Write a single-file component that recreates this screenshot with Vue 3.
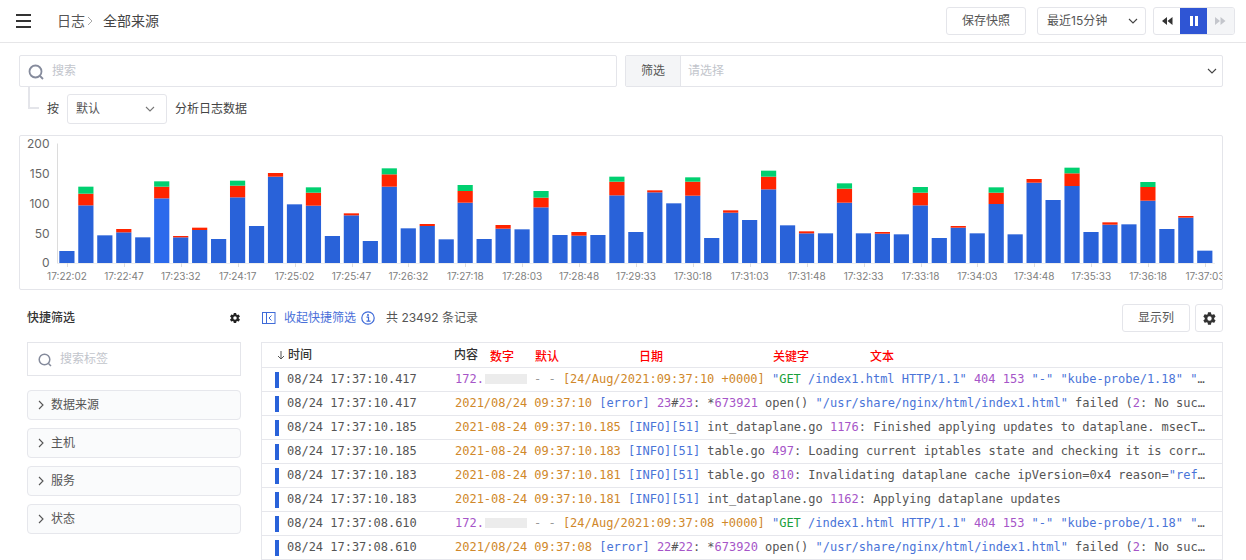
<script setup>
const bar = [
  [363],[226,191,170],[316],[307,297],[322],[205,170,154],[322,318],[300,293],[327],[202,167,152],
  [288],[140,129],[223],[227,188,172],[318],[256,250],[333],[170,133,115],[295],[288,282],
  [328],[218,183,165],[327],[296,285],[298],[232,203,183],[315],[317,306],[315],[196,155,140],
  [306],[187,181],[220],[197,155,142],[324],[248,241],[270],[178,140,122],[286],[310,304],
  [310],[218,176,160],[310],[311,306],[313],[226,188,171],[324],[293,288],[310],[222,188,172],
  [313],[158,147],[210],[168,130,113],[306],[284,277],[283],[212,171,156],[297],[263,258],[362]
]
const colors = ['#2962d9', '#ff2400', '#00d070']
const y = v => 130 + v / 3
const rects = []
bar.forEach((tops, i) => {
  const x = 59.3 + 18.965 * i
  tops.forEach((t, k) => {
    const bottom = k === 0 ? 263 : y(tops[k - 1])
    rects.push({ x, y: y(t), h: bottom - y(t), fill: i === 5 && k === 0 ? '#2c6aec' : colors[k] })
  })
})
const xLabels = ['17:22:02','17:22:47','17:23:32','17:24:17','17:25:02','17:25:47','17:26:32','17:27:18','17:28:03','17:28:48','17:29:33','17:30:18','17:31:03','17:31:48','17:32:33','17:33:18','17:34:03','17:34:48','17:35:33','17:36:18','17:37:03']
  .map((text, i) => ({ text, x: 67 + 56.9 * i }))
const yLabels = [['200',143.5],['150',173.5],['100',203.5],['50',233.5],['0',262.5]].map(([text, y]) => ({ text, y }))

const access = ts => [
  ['p','172.'],['mask',''],['g',' - - '],['o',`[${ts} +0000]`],['b',' "'],['gr','GET'],['b',' /index1.html HTTP/1.1" '],['p','404 153'],['b',' "-" "kube-probe/1.18" "Mozilla/5.0 compatible"']
]
const rows = [
  { t:'08/24 17:37:10.417', c: access('24/Aug/2021:09:37:10') },
  { t:'08/24 17:37:10.417', c: [['o','2021/08/24 09:37:10'],['b',' [error]'],['p',' 23'],['d','#'],['p','23'],['d',': *'],['p','673921'],['d',' open() '],['b','"/usr/share/nginx/html/index1.html"'],['d',' failed ('],['p','2'],['d',': No such file or directory), client']] },
  { t:'08/24 17:37:10.185', c: [['o','2021-08-24 09:37:10.185'],['b',' [INFO][51]'],['d',' int_dataplane.go '],['p','1176'],['d',': Finished applying updates to dataplane. msecToApply=12.5 ms']] },
  { t:'08/24 17:37:10.185', c: [['o','2021-08-24 09:37:10.183'],['b',' [INFO][51]'],['d',' table.go '],['p','497'],['d',': Loading current iptables state and checking it is correct. ipVersion']] },
  { t:'08/24 17:37:10.183', c: [['o','2021-08-24 09:37:10.181'],['b',' [INFO][51]'],['d',' table.go '],['p','810'],['d',': Invalidating dataplane cache ipVersion=0x4 reason='],['b','"refresh timer"']] },
  { t:'08/24 17:37:10.183', c: [['o','2021-08-24 09:37:10.181'],['b',' [INFO][51]'],['d',' int_dataplane.go '],['p','1162'],['d',': Applying dataplane updates']] },
  { t:'08/24 17:37:08.610', c: access('24/Aug/2021:09:37:08') },
  { t:'08/24 17:37:08.610', c: [['o','2021/08/24 09:37:08'],['b',' [error]'],['p',' 22'],['d','#'],['p','22'],['d',': *'],['p','673920'],['d',' open() '],['b','"/usr/share/nginx/html/index1.html"'],['d',' failed ('],['p','2'],['d',': No such file or directory), client']] }
]
const groups = ['数据来源', '主机', '服务', '状态']
const gear = 'M19.4 13c.04-.33.06-.66.06-1s-.02-.67-.07-1l2.1-1.65a.5.5 0 0 0 .12-.64l-2-3.46a.5.5 0 0 0-.6-.22l-2.49 1a7.3 7.3 0 0 0-1.72-1l-.38-2.65A.5.5 0 0 0 13.93 2h-4a.5.5 0 0 0-.5.42l-.37 2.65c-.62.25-1.2.59-1.73 1l-2.49-1a.5.5 0 0 0-.6.22l-2 3.46a.5.5 0 0 0 .12.64L4.47 11a7.9 7.9 0 0 0 0 2l-2.11 1.65a.5.5 0 0 0-.12.64l2 3.46c.12.22.38.3.6.22l2.49-1c.53.4 1.11.74 1.73 1l.37 2.65c.05.24.26.42.5.42h4c.25 0 .46-.18.5-.42l.37-2.65c.62-.26 1.2-.6 1.73-1l2.49 1c.22.08.48 0 .6-.22l2-3.46a.5.5 0 0 0-.12-.64L19.4 13zM12 15.5a3.5 3.5 0 1 1 0-7 3.5 3.5 0 0 1 0 7z'
</script>

<template>
  <div class="page">
    <header class="topbar">
      <svg class="menu" width="15" height="14" viewBox="0 0 15 14"><path d="M0 1h15M0 7h15M0 13h15" stroke="#333" stroke-width="2"/></svg>
      <span class="crumb">日志</span>
      <svg class="crumb-sep" width="6" height="10" viewBox="0 0 6 10"><path d="M1 1l4 4-4 4" fill="none" stroke="#aaa"/></svg>
      <span class="crumb current">全部来源</span>
      <div class="spacer"></div>
      <button class="btn save">保存快照</button>
      <div class="select range"><span>最近15分钟</span><svg width="10" height="6" viewBox="0 0 10 6"><path d="M1 1l4 4 4-4" fill="none" stroke="#444" stroke-width="1.1"/></svg></div>
      <div class="player">
        <span class="seg first"><svg width="11" height="8" viewBox="0 0 11 8"><path d="M5 0v8L0 4zM10.500 0v8l-5-4z" fill="#333"/></svg></span>
        <span class="seg on"><svg width="8" height="10" viewBox="0 0 8 10"><path d="M0 0h3v10H0zM5 0h3v10H5z" fill="#fff"/></svg></span>
        <span class="seg off"><svg width="11" height="8" viewBox="0 0 11 8"><path d="M0 0v8l5-4zM5.500 0v8l5-4z" fill="#c4c6cc"/></svg></span>
      </div>
    </header>

    <main class="main">
      <div class="search-row">
        <div class="field">
          <svg width="16" height="16" viewBox="0 0 16 16"><circle cx="7.500" cy="7.500" r="6" fill="none" stroke="#858b9c" stroke-width="1.800"/><path d="M12 12l3 3" stroke="#858b9c" stroke-width="1.800"/></svg>
          <span class="ph">搜索</span>
        </div>
        <div class="field filter">
          <span class="addon">筛选</span>
          <span class="ph grow">请选择</span>
          <svg class="fchev" width="10" height="6" viewBox="0 0 10 6"><path d="M1 1l4 4 4-4" fill="none" stroke="#444" stroke-width="1.100"/></svg>
        </div>
      </div>

      <div class="analyze">
        <i class="elbow"></i>
        <span class="by">按</span>
        <div class="select small"><span>默认</span><svg width="10" height="6" viewBox="0 0 10 6"><path d="M1 1l4 4 4-4" fill="none" stroke="#777" stroke-width="1.100"/></svg></div>
        <span class="an-text">分析日志数据</span>
      </div>

      <div class="chart">
        <svg width="1202" height="153" viewBox="20 136 1202 153">
          <path d="M57.500 143.500V263" stroke="#dcdcdc" fill="none"/>
          <path d="M57 263.500H1215" stroke="#eeeeee" fill="none"/>
          <text v-for="l in yLabels" :key="l.text" class="ylab" x="49.500" :y="l.y + 4.500" text-anchor="end">{{ l.text }}</text>
          <rect v-for="(r, i) in rects" :key="i" :x="r.x" :y="r.y" :width="15.200" :height="r.h" :fill="r.fill" />
          <g v-for="l in xLabels" :key="l.text">
            <path :d="`M${Math.round(l.x) + 0.5} 263v4`" stroke="#dcdcdc" fill="none" />
            <text class="xlab" :x="l.x" y="280" text-anchor="middle">{{ l.text }}</text>
          </g>
        </svg>
      </div>

      <div class="lower">
        <aside class="side">
          <div class="side-head">
            <span>快捷筛选</span>
            <svg width="12" height="12" viewBox="0 0 24 24"><path :d="gear" fill="#222" fill-rule="evenodd"/></svg>
          </div>
          <div class="tag-search">
            <svg width="14" height="14" viewBox="0 0 14 14"><circle cx="6.500" cy="6.500" r="5.300" fill="none" stroke="#858b9c" stroke-width="1.500"/><path d="M10.500 10.500l2.500 2.500" stroke="#858b9c" stroke-width="1.500"/></svg>
            <span class="ph">搜索标签</span>
          </div>
          <div v-for="g in groups" :key="g" class="group">
            <svg width="6" height="10" viewBox="0 0 6 10"><path d="M1 1l4 4-4 4" fill="none" stroke="#555" stroke-width="1.100"/></svg>
            <span>{{ g }}</span>
          </div>
        </aside>

        <section class="content">
          <div class="toolbar">
            <svg width="14" height="12" viewBox="0 0 14 12"><rect x=".5" y=".5" width="12.500" height="11" fill="none" stroke="#3f6bd8"/><path d="M4.500 .5v11M9.500 3.500L7 6l2.500 2.500" fill="none" stroke="#3f6bd8"/></svg>
            <span class="link">收起快捷筛选</span>
            <svg class="info" width="14" height="14" viewBox="0 0 14 14"><circle cx="7" cy="7" r="6.200" fill="none" stroke="#3f6bd8" stroke-width="1.200"/><path d="M5.500 6.200H7.500V10M5.500 10.200h4" fill="none" stroke="#3f6bd8" stroke-width="1.200"/><circle cx="7" cy="4" r="1" fill="#3f6bd8"/></svg>
            <span class="count">共 23492 条记录</span>
            <div class="spacer"></div>
            <button class="btn cols">显示列</button>
            <button class="btn cog"><svg width="15" height="15" viewBox="0 0 24 24"><path :d="gear" fill="#333" fill-rule="evenodd"/></svg></button>
          </div>

          <div class="table">
            <div class="thead">
              <svg class="arrow" width="8" height="9" viewBox="0 0 8 9"><path d="M4 0v8M1 5l3 3 3-3" fill="none" stroke="#555"/></svg>
              <span class="th-time">时间</span>
              <span>内容</span>
              <span class="tag t1">数字</span>
              <span class="tag t2">默认</span>
              <span class="tag t3">日期</span>
              <span class="tag t4">关键字</span>
              <span class="tag t5">文本</span>
            </div>
            <div v-for="(r, i) in rows" :key="i" class="row">
              <i class="mark"></i>
              <span class="time">{{ r.t }}</span>
              <span class="log"><template v-for="(s, k) in r.c" :key="k"><i v-if="s[0] === 'mask'" class="mask"></i><span v-else :class="s[0]">{{ s[1] }}</span></template></span>
            </div>
          </div>
        </section>
      </div>
    </main>
  </div>
</template>

<style>
html, body { margin: 0; background: #fff; overflow: hidden; }
</style>

<style scoped>
.page { width: 1246px; height: 560px; overflow: hidden; font: 12px/1.4 Inter, "Noto Sans CJK SC", sans-serif; color: #555; background: #fff; }
.spacer { flex: 1; }
.topbar { height: 42px; border-bottom: 1px solid #e6e6e8; display: flex; align-items: center; padding: 0 11px 0 16px; }
.menu { margin-right: 26px; }
.crumb { font-size: 14px; color: #555; }
.crumb-sep { margin: 0 10px 0 2px; }
.crumb.current { color: #444; }
.btn { font: inherit; color: #555; background: #fff; border: 1px solid #e4e5ea; border-radius: 3px; padding: 0; display: flex; align-items: center; justify-content: center; }
.save { width: 80px; height: 28px; margin-right: 11px; }
.select { box-sizing: border-box; border: 1px solid #e4e5ea; border-radius: 3px; display: flex; align-items: center; justify-content: space-between; color: #555; background: #fff; }
.range { width: 109px; height: 28px; padding: 0 7px 0 9px; margin-right: 7px; }
.player { display: flex; height: 28px; box-sizing: border-box; border: 1px solid #e4e5ea; border-radius: 3px; overflow: hidden; width: 82px; }
.seg { display: flex; align-items: center; justify-content: center; margin: -1px 0; }
.seg.first { width: 26px; }
.seg.on { width: 27px; background: #2f55d4; }
.seg.off { flex: 1; background: #f4f5f7; }
.main { padding: 12px 23px 0 19px; }
.search-row { display: grid; grid-template-columns: 1fr 1fr; gap: 8px; }
.field { box-sizing: border-box; height: 32px; border: 1px solid #e4e5ea; border-radius: 2px; display: flex; align-items: center; padding: 1px 0 0 8px; }
.ph { color: #c2c5cc; margin-left: 8px; }
.filter { padding: 0; }
.addon { width: 55px; height: 100%; padding-top: 1px; box-sizing: border-box; background: #f4f5f7; border-right: 1px solid #e4e5ea; display: flex; align-items: center; justify-content: center; color: #555; }
.grow { flex: 1; margin-left: 7px; padding-top: 1px; }
.fchev { margin-right: 5px; margin-top: -1px; }
.analyze { display: flex; align-items: center; height: 30px; margin-top: 7px; }
.elbow { width: 11px; height: 22px; align-self: flex-start; margin: -7px 0 0 9px; box-sizing: border-box; border-left: 2px solid #e4e5ea; border-bottom: 2px solid #e4e5ea; }
.by { margin-left: 8px; width: 20px; color: #444; }
.small { width: 100px; height: 30px; padding: 0 11px 0 8px; color: #555; }
.an-text { margin-left: 8px; color: #444; }
.chart { box-sizing: border-box; width: 1204px; height: 155px; margin-top: 11px; border: 1px solid #e4e5ea; border-radius: 2px; overflow: hidden; }
.chart svg { display: block; }
.ylab { font-size: 12px; fill: #666; }
.xlab { font-size: 10px; fill: #808080; }
.lower { display: flex; margin-top: 14px; }
.side { width: 214px; margin-left: 8px; margin-right: 20px; flex: none; }
.side-head { height: 28px; display: flex; align-items: center; justify-content: space-between; font-weight: 500; color: #333; margin-bottom: 10px; }
.tag-search { box-sizing: border-box; height: 34px; border: 1px solid #e4e5ea; display: flex; align-items: center; padding: 1px 0 0 10px; margin-bottom: 14px; }
.group { box-sizing: border-box; height: 30px; border: 1px solid #e6e7ec; border-radius: 4px; background: #fafbfc; display: flex; align-items: center; padding-left: 10px; margin-bottom: 8px; gap: 7px; color: #555; }
.group span { padding-top: 1px; }
.content { flex: none; width: 962px; }
.toolbar { height: 28px; display: flex; align-items: center; margin-bottom: 10px; padding-left: 1px; }
.link { color: #4a70d9; margin-left: 8px; }
.info { margin-left: 5px; }
.count { margin-left: 11px; color: #555; }
.cols { width: 68px; height: 28px; margin-right: 5px; }
.cog { width: 28px; height: 28px; }
.table { border: 1px solid #e6e7ec; border-bottom: 0; }
.thead { height: 24px; border-bottom: 1px solid #e6e7ec; display: flex; align-items: center; color: #333; font-weight: 500; padding-left: 15px; }
.arrow { margin-right: 3px; }
.th-time { width: 166px; }
.tag { color: #f00; font-size: 12px; position: relative; top: 2px; }
.t1 { margin-left: 12px; }
.t2 { margin-left: 21px; }
.t3 { margin-left: 80px; }
.t4 { margin-left: 110px; }
.t5 { margin-left: 61px; }
.row { height: 23px; border-bottom: 1px solid #e6e7ec; display: flex; align-items: center; padding-left: 13px; font: 12px/1.4 "DejaVu Sans Mono", monospace; letter-spacing: -0.015px; color: #555; }
.mark { width: 4px; height: 16px; background: #2962d9; margin-right: 8px; flex: none; }
.time { width: 168px; flex: none; white-space: pre; }
.log { width: 750px; flex: none; overflow: hidden; white-space: pre; text-overflow: ellipsis; }
.mask { display: inline-block; width: 42px; height: 10px; background: #ececec; vertical-align: -1px; margin-left: 1px; }
.p { color: #a655c8; }
.o { color: #d0882a; }
.b { color: #4a74d8; }
.g { color: #999; }
.gr { color: #1a9f3c; }
.d { color: #555; }
</style>
